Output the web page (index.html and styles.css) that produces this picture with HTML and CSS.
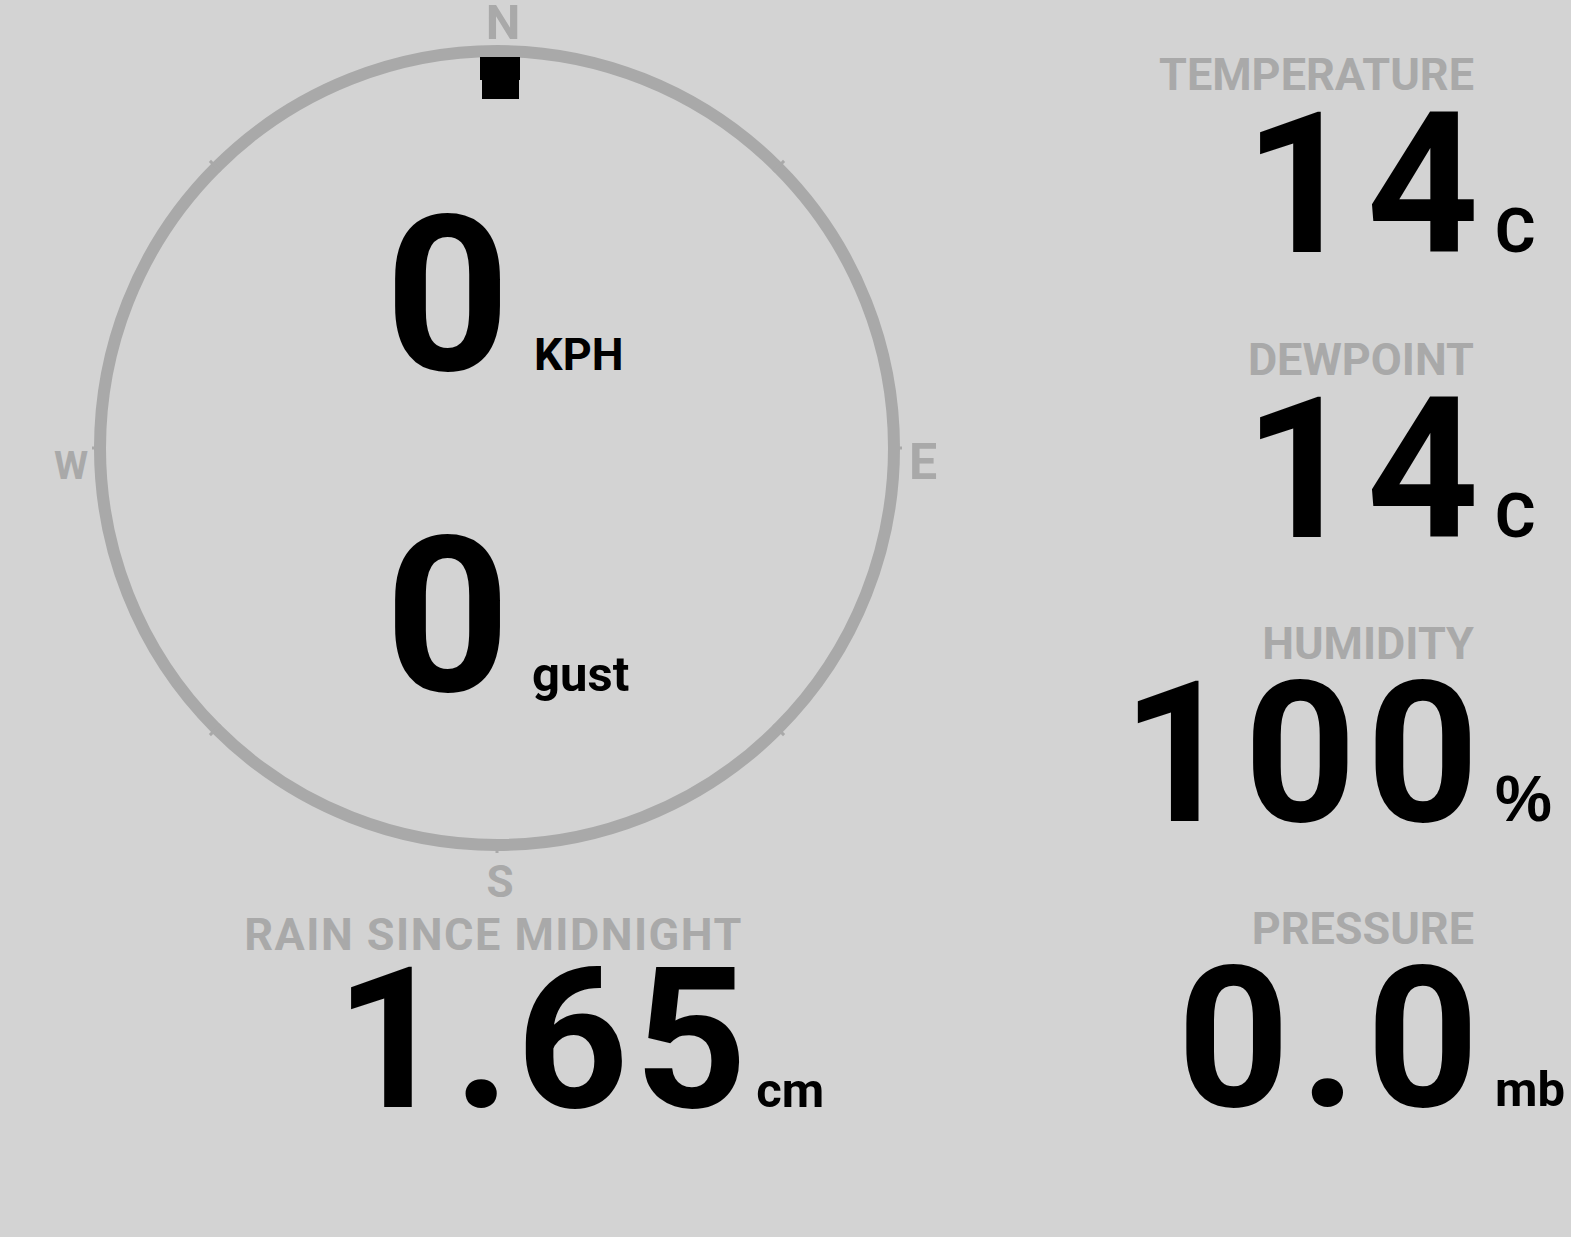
FILE: index.html
```html
<!DOCTYPE html>
<html lang="en">
<head>
<meta charset="utf-8">
<title>Weather</title>
<link rel="stylesheet" href="styles.css">
</head>
<body>
<main class="board">
  <section class="left">
    <div class="compass">
      <svg class="dial" width="810" height="810" viewBox="0 0 810 810" aria-hidden="true">
        <circle cx="405" cy="405" r="397" fill="none" stroke="#a9a9a9" stroke-width="12"/>
        <g stroke="#a9a9a9" stroke-width="3">
          <line x1="405" y1="-1" x2="405" y2="14" transform="rotate(45 405 405)"/>
          <line x1="405" y1="-1" x2="405" y2="14" transform="rotate(90 405 405)"/>
          <line x1="405" y1="-1" x2="405" y2="14" transform="rotate(135 405 405)"/>
          <line x1="405" y1="-1" x2="405" y2="14" transform="rotate(180 405 405)"/>
          <line x1="405" y1="-1" x2="405" y2="14" transform="rotate(225 405 405)"/>
          <line x1="405" y1="-1" x2="405" y2="14" transform="rotate(270 405 405)"/>
          <line x1="405" y1="-1" x2="405" y2="14" transform="rotate(315 405 405)"/>
        </g>
        <path d="M388 14 H428 V37 H427 V56 H390 V37 H388 Z" fill="#000"/>
      </svg>
      <span class="cardinal north">N</span>
      <span class="cardinal east">E</span>
      <span class="cardinal south">S</span>
      <span class="cardinal west">W</span>
      <div class="speeds">
        <div class="speed-row">
          <span class="speed-value">0</span>
          <span class="speed-unit caps">KPH</span>
        </div>
        <div class="speed-row">
          <span class="speed-value">0</span>
          <span class="speed-unit gust">gust</span>
        </div>
      </div>
    </div>
    <div class="rain">
      <div class="label rain-label">RAIN SINCE MIDNIGHT</div>
      <div class="rain-reading">
        <span class="value">1.65</span>
        <span class="unit unit-small">cm</span>
      </div>
    </div>
  </section>

  <section class="right">
    <div class="stat">
      <div class="label">TEMPERATURE</div>
      <div class="reading">
        <span class="value">14</span>
        <span class="unit unit-big">C</span>
      </div>
    </div>
    <div class="stat">
      <div class="label">DEWPOINT</div>
      <div class="reading">
        <span class="value">14</span>
        <span class="unit unit-big">C</span>
      </div>
    </div>
    <div class="stat">
      <div class="label">HUMIDITY</div>
      <div class="reading">
        <span class="value">100</span>
        <span class="unit unit-pct">%</span>
      </div>
    </div>
    <div class="stat">
      <div class="label">PRESSURE</div>
      <div class="reading">
        <span class="value">0.0</span>
        <span class="unit unit-small">mb</span>
      </div>
    </div>
  </section>
</main>
</body>
</html>
```

FILE: styles.css
```css
html, body {
  margin: 0;
  padding: 0;
}

body {
  background: #d3d3d3;
  color: #000;
  font-family: Roboto, "Liberation Sans", sans-serif;
  font-weight: 700;
  line-height: 1;
  width: 1571px;
  height: 1237px;
  overflow: hidden;
}

.board {
  display: grid;
  grid-template-columns: 1000px 1fr;
}

/* ---------- shared text ---------- */

.label {
  font-size: 45px;
  line-height: 1;
  color: #a9a9a9;
  white-space: nowrap;
}

.value {
  font-size: 196px;
  line-height: 0.85;
  letter-spacing: 10px;
  white-space: nowrap;
}

.unit {
  white-space: nowrap;
  line-height: 1;
}

.unit-big {
  font-size: 62px;
}

.unit-pct {
  font-size: 64px;
  font-family: "Liberation Sans", Roboto, sans-serif;
}

.unit-small {
  font-size: 49px;
}

/* ---------- left: compass + rain ---------- */

.left {
  display: flex;
  flex-direction: column;
}

.compass {
  position: relative;
  width: 810px;
  height: 810px;
  margin: 43px 0 0 92px;
  display: grid;
}

.dial {
  grid-area: 1 / 1;
  display: block;
}

.cardinal {
  position: absolute;
  color: #a9a9a9;
  width: 80px;
  text-align: center;
  line-height: 1;
}

.north {
  font-size: 49px;
  top: -45px;
  left: 371px;
}

.east {
  font-size: 50px;
  top: 394px;
  left: 817px;
  width: auto;
}

.south {
  font-size: 44px;
  top: 817px;
  left: 368px;
}

.west {
  font-size: 39px;
  top: 404px;
  left: -61px;
}

.speeds {
  grid-area: 1 / 1;
  display: flex;
  flex-direction: column;
  gap: 103px;
  padding: 144px 0 0 293px;
}

.speed-row {
  display: flex;
  align-items: baseline;
  gap: 24px;
}

.speed-value {
  font-size: 218px;
}

.speed-unit.caps {
  font-size: 45px;
}

.speed-unit.gust {
  font-size: 49px;
  margin-left: -2px;
}

.rain {
  margin-top: 59px;
  display: flex;
  flex-direction: column;
}

.rain-label {
  padding-right: 13px;
  text-align: center;
  letter-spacing: 1.5px;
}

.rain-reading {
  display: flex;
  align-items: baseline;
  padding-left: 335px;
}

.rain-reading .value {
  letter-spacing: 6px;
}

.rain-reading .unit {
  margin-left: 3px;
}

/* ---------- right: stats ---------- */

.right {
  display: flex;
  flex-direction: column;
  align-items: flex-end;
  padding: 52px 97px 0 0;
}

.stat {
  display: flex;
  flex-direction: column;
  align-items: flex-end;
  margin-bottom: 68px;
}

.reading {
  display: flex;
  align-items: baseline;
  margin-top: 5px;
  margin-right: -21px;
}

.reading .unit {
  width: 0;
  margin-left: 6px;
}
```
